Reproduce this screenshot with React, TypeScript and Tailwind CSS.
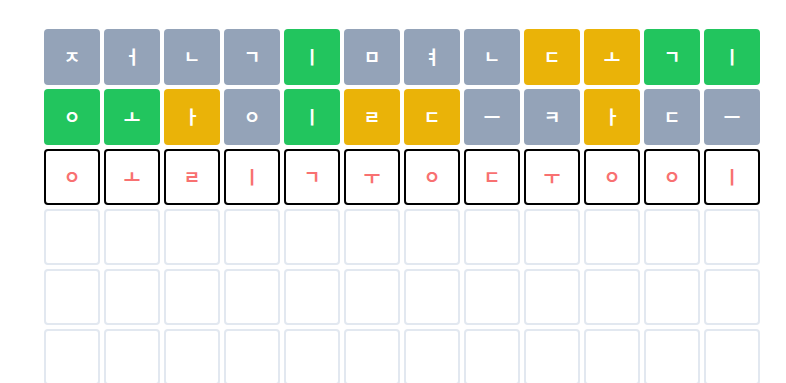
const rows: { ch: string; st: string }[][] = [
  "ㅈ:x ㅓ:x ㄴ:x ㄱ:x ㅣ:g ㅁ:x ㅕ:x ㄴ:x ㄷ:y ㅗ:y ㄱ:g ㅣ:g",
  "ㅇ:g ㅗ:g ㅏ:y ㅇ:x ㅣ:g ㄹ:y ㄷ:y ㅡ:x ㅋ:x ㅏ:y ㄷ:x ㅡ:x",
  "ㅇ:c ㅗ:c ㄹ:c ㅣ:c ㄱ:c ㅜ:c ㅇ:c ㄷ:c ㅜ:c ㅇ:c ㅇ:c ㅣ:c",
].map((r) =>
  r.split(" ").map((t) => {
    const [ch, st] = t.split(":");
    return { ch, st };
  })
);

const empty = Array.from({ length: 12 }, () => ({ ch: "", st: "e" }));
const grid = [...rows, empty, empty, empty];

function tileClass(st: string) {
  switch (st) {
    case "x":
      return "bg-[#94a3b8] text-white";
    case "g":
      return "bg-[#22c55e] text-white";
    case "y":
      return "bg-[#eab308] text-white";
    case "c":
      return "bg-white border-2 border-black text-[#f87171]";
    default:
      return "bg-white border-2 border-[#e2e8f0]";
  }
}

export default function App() {
  return (
    <div
      className="min-h-screen bg-white pt-[29px] pl-[44px]"
      style={{ fontFamily: '"Noto Sans", "Noto Sans CJK KR", sans-serif' }}
    >
      <div className="grid grid-cols-[repeat(12,56px)] gap-1">
        {grid.map((row, i) =>
          row.map((t, j) => (
            <div
              key={`${i}-${j}`}
              className={`w-14 h-14 rounded flex items-center justify-center text-lg font-bold ${tileClass(t.st)}`}
            >
              {t.ch}
            </div>
          ))
        )}
      </div>
    </div>
  );
}
